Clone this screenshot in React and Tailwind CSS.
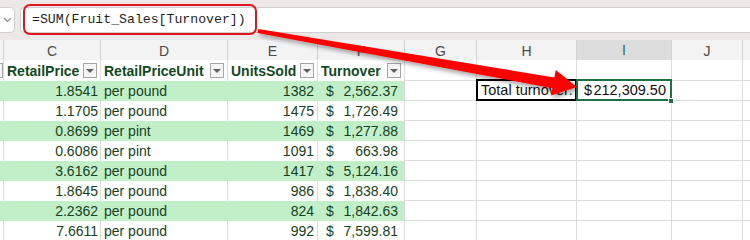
import React from "react";

const GRID =
  "grid grid-cols-[4px_97px_127px_90px_87px_72px_100px_95px_71px_1fr]";

const rows = [
  ["1.8541", "per pound", "1382", "2,562.37"],
  ["1.1705", "per pound", "1475", "1,726.49"],
  ["0.8699", "per pint", "1469", "1,277.88"],
  ["0.6086", "per pint", "1091", "663.98"],
  ["3.6162", "per pound", "1417", "5,124.16"],
  ["1.8645", "per pound", "986", "1,838.40"],
  ["2.2362", "per pound", "824", "1,842.63"],
  ["7.6611", "per pound", "992", "7,599.81"],
];

function FilterBtn() {
  return (
    <div className="w-[14px] h-[15px] mr-[3px] border border-[#a6a6a6] bg-[#f5f5f5] flex items-center justify-center shrink-0">
      <div className="w-0 h-0 border-l-[4px] border-r-[4px] border-t-[4px] border-l-transparent border-r-transparent border-t-[#606060]" />
    </div>
  );
}

function HeadCell({ label }) {
  return (
    <div className="flex items-center justify-between border-r border-[#dcdcdc] bg-white pl-[3px]">
      <span className="font-bold text-[14px] text-[#124a1f] leading-none">{label}</span>
      <FilterBtn />
    </div>
  );
}

function Empty({ extra = "" }) {
  return <div className={"border-r border-b border-[#dcdcdc] bg-white " + extra} />;
}

export default function App() {
  return (
    <div
      className="relative w-[750px] h-[240px] overflow-hidden bg-white"
      style={{ fontFamily: '"Liberation Sans", Arial, sans-serif' }}
    >
      {/* Formula bar area */}
      <div className="bg-[#ece8e8]">
        <div className="h-[7px]" />
        <div className="h-[26px] flex">
          <div className="w-[15px] bg-white border border-l-0 border-[#cfcfcf] rounded-r-[5px] flex items-center justify-center">
            <svg width="9" height="6" viewBox="0 0 9 6">
              <path d="M1 1 L4.5 4.5 L8 1" fill="none" stroke="#8a8a8a" strokeWidth="1.1" />
            </svg>
          </div>
          <div className="flex-1 ml-[5px] bg-white border-y border-l border-[#cfcfcf] rounded-l-[5px] flex items-center pl-[11px]">
            <span
              className="text-[13.2px] text-[#1f1f1f] leading-none"
              style={{ fontFamily: '"Liberation Mono", "DejaVu Sans Mono", monospace' }}
            >
              =SUM(Fruit_Sales[Turnover])
            </span>
          </div>
        </div>
        <div className="h-[7px]" />
      </div>

      {/* Column letters */}
      <div className={GRID + " h-[20px] bg-[#f3f3f3] text-[14px] text-[#4a4a4a]"}>
        <div className="border-r border-b border-[#d2d2d2]" />
        {["C", "D", "E", "F", "G", "H"].map((l) => (
          <div key={l} className="flex items-center justify-center border-r border-b border-[#d2d2d2]">
            {l}
          </div>
        ))}
        <div className="flex items-center justify-center border-r border-[#d2d2d2] border-b-2 border-b-[#1e7145] bg-[#dcdcdc] text-[#1e7145]">
          I
        </div>
        <div className="flex items-center justify-center border-r border-b border-[#d2d2d2]">J</div>
        <div className="border-b border-[#d2d2d2]" />
      </div>

      {/* Table header row */}
      <div className={GRID + " h-[21px]"}>
        <div className="flex items-center border-r border-[#dcdcdc] bg-white">
          <div className="w-[3px] h-[15px] border border-l-0 border-[#a6a6a6] bg-[#f5f5f5]" />
        </div>
        <HeadCell label="RetailPrice" />
        <HeadCell label="RetailPriceUnit" />
        <HeadCell label="UnitsSold" />
        <HeadCell label="Turnover" />
        <Empty />
        <Empty />
        <Empty />
        <Empty />
        <Empty extra="border-r-0" />
      </div>

      {/* Data rows */}
      {rows.map((r, i) => {
        const green = i % 2 === 0;
        const bg = green ? "bg-[#c1f0c8]" : "bg-white";
        const inner = green ? "border-r border-[#c1f0c8]" : "border-r border-[#dcdcdc]";
        return (
          <div key={i} className={GRID + " h-[20px] text-[14px] text-[#173f22] leading-none"}>
            <div className={bg + " " + inner} />
            <div className={bg + " " + inner + " flex items-center justify-end pr-[2px]"}>{r[0]}</div>
            <div className={bg + " " + inner + " flex items-center pl-[3px]"}>{r[1]}</div>
            <div className={bg + " " + inner + " flex items-center justify-end pr-[3px]"}>{r[2]}</div>
            <div className={bg + " border-r border-[#dcdcdc] flex items-center justify-between pl-[8px] pr-[6px]"}>
              <span>$</span>
              <span>{r[3]}</span>
            </div>
            <Empty />
            {i === 0 ? (
              <div className="relative border-r border-b border-[#dcdcdc] bg-white flex items-center pl-[4px] text-[14.5px] text-[#111] whitespace-nowrap">
                <div className="absolute -left-[1px] -top-[2px] -right-[1px] -bottom-[1px] border-2 border-black" />
                Total turnover:
              </div>
            ) : (
              <Empty />
            )}
            {i === 0 ? (
              <div className="relative border-r border-b border-[#dcdcdc] bg-white flex items-center justify-between pl-[7px] pr-[5px] text-[14.5px] text-[#111]">
                <div className="absolute -left-[1px] -top-[2px] right-[-1px] -bottom-[1px] border-2 border-[#1e7145]" />
                <div className="absolute -right-[3px] -bottom-[4px] w-[6px] h-[6px] bg-[#1e7145] border border-white" />
                <span>$</span>
                <span>212,309.50</span>
              </div>
            ) : (
              <Empty />
            )}
            <Empty />
            <Empty extra="border-r-0" />
          </div>
        );
      })}

      {/* Annotation: red box */}
      <div className="absolute left-[23px] top-[4px] w-[234px] h-[31px] border-2 border-[#e3141c] rounded-[7px] pointer-events-none" />

      {/* Annotation: red arrow */}
      <svg className="absolute left-0 top-0 pointer-events-none" width="750" height="240" viewBox="0 0 750 240">
        <defs>
          <filter id="sh" x="-10%" y="-50%" width="120%" height="200%">
            <feDropShadow dx="2" dy="3" stdDeviation="2" floodColor="#000" floodOpacity="0.35" />
          </filter>
        </defs>
        <polygon
          filter="url(#sh)"
          fill="#ff0000"
          points="258.35,29.03 554.4,77.4 555.7,70.0 577,87 551.1,95.6 552.4,88.2 257.65,32.97"
        />
      </svg>
    </div>
  );
}
